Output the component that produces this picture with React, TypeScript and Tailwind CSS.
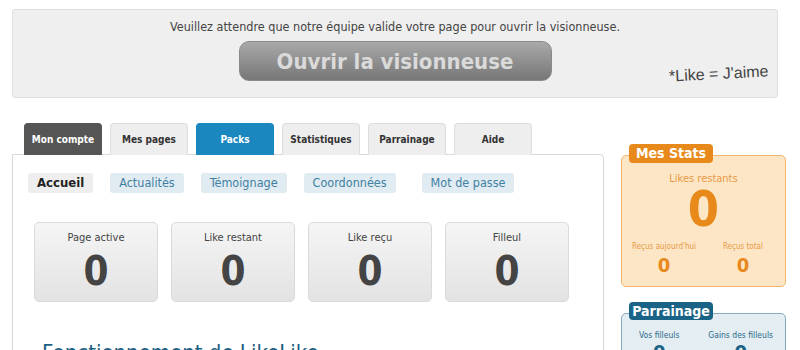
import React from "react";

const tabs = [
  { label: "Mon compte", cls: "bg-[#555555] text-white border-[#555555]" },
  { label: "Mes pages", cls: "bg-[#eeeeee] text-[#333333] border-[#dddddd]" },
  { label: "Packs", cls: "bg-[#1a87bf] text-white border-[#1a87bf]" },
  { label: "Statistiques", cls: "bg-[#eeeeee] text-[#333333] border-[#dddddd]" },
  { label: "Parrainage", cls: "bg-[#eeeeee] text-[#333333] border-[#dddddd]" },
  { label: "Aide", cls: "bg-[#eeeeee] text-[#333333] border-[#dddddd]" },
];

const subnav = [
  { s: "Actualités", m: "ml-[17px]" },
  { s: "Témoignage", m: "ml-[17px]" },
  { s: "Coordonnées", m: "ml-[17px]" },
  { s: "Mot de passe", m: "ml-[26px]" },
];

const cards = ["Page active", "Like restant", "Like reçu", "Filleul"];

export default function App() {
  return (
    <div
      className="w-[800px] h-[350px] overflow-hidden bg-white"
      style={{ fontFamily: '"DejaVu Sans Condensed", "DejaVu Sans", sans-serif' }}
    >
      <div className="pt-[9px] px-[12px]">
        <div className="h-[89px] w-[766px] rounded-[3px] border border-[#dedede] bg-[#efefef] flex flex-col items-center">
          <div className="mt-[9px] text-[12.5px] leading-[16px] text-[#444444]">
            Veuillez attendre que notre équipe valide votre page pour ouvrir la visionneuse.
          </div>
          <div className="w-full grid grid-cols-[1fr_auto_1fr] mt-[6px]">
            <div />
            <div className="w-[313px] h-[40px] rounded-[10px] border border-[#8a8a8a] bg-gradient-to-b from-[#a9a9a9] to-[#777777] flex items-center justify-center text-[22px] text-[#dadada] font-bold">
              Ouvrir la visionneuse
            </div>
            <div className="self-end justify-self-end pr-[8px]">
              <div className="text-[16px] text-[#444444] -rotate-3 leading-[18px] translate-y-[2px]" style={{ fontFamily: '"Liberation Sans", sans-serif' }}>
                *Like = J'aime
              </div>
            </div>
          </div>
        </div>

        <div className="flex mt-[25px] gap-[17px]">
          <div className="w-[592px]">
            <div className="flex gap-[8px] pl-[12px]">
              {tabs.map((t) => (
                <div
                  key={t.label}
                  className={`w-[78px] h-[32px] rounded-t-[4px] border border-b-0 flex items-center justify-center text-[10px] font-bold ${t.cls}`}
                >
                  {t.label}
                </div>
              ))}
            </div>
            <div className="h-[200px] -mt-[1px] border border-[#d8d8d8] rounded-tr-[4px] bg-white">
              <div className="flex pl-[15px] pt-[18px]">
                <div className="h-[20px] px-[9px] rounded-[3px] bg-[#eeeeee] text-[13px] font-bold text-[#222222] flex items-center">
                  Accueil
                </div>
                {subnav.map((x) => (
                  <div
                    key={x.s}
                    className={`${x.m} h-[20px] px-[9px] rounded-[3px] bg-[#e1ecf2] text-[12.5px] text-[#3f7fa3] flex items-center`}
                  >
                    {x.s}
                  </div>
                ))}
              </div>
              <div className="flex gap-[13px] pl-[21px] mt-[29px]">
                {cards.map((c) => (
                  <div
                    key={c}
                    className="w-[124px] h-[80px] rounded-[5px] border border-[#dadada] bg-gradient-to-b from-[#f5f5f5] to-[#e3e3e3] flex flex-col items-center"
                  >
                    <div className="mt-[8px] text-[11px] leading-[14px] text-[#444444]">{c}</div>
                    <div className="mt-[6px] text-[40px] leading-[40px] font-bold text-[#444444]">0</div>
                  </div>
                ))}
              </div>
              <div className="pl-[29px] mt-[38px] text-[22px] leading-[26px] text-[#1b5f83]">
                Fonctionnement de LikeLike
              </div>
            </div>
          </div>

          <div className="w-[165px] pt-[21px]">
            <div className="relative z-10 ml-[8px] w-[84px] h-[19px] rounded-[4px] bg-[#e8891c] text-white text-[14px] font-bold flex items-center justify-center">
              Mes Stats
            </div>
            <div className="-mt-[8px] h-[132px] rounded-[5px] border border-[#f3b46b] bg-[#fde6c6] flex flex-col items-center">
              <div className="mt-[16px] text-[11px] leading-[14px] text-[#e89a45]">Likes restants</div>
              <div className="text-[50px] leading-[46px] font-bold text-[#e8891c]">0</div>
              <div className="w-full flex justify-between mt-[9px] pl-[10px] pr-[22px]">
                <div className="flex flex-col items-center">
                  <div className="text-[8px] leading-[12px] text-[#e89a45]">Reçus aujourd'hui</div>
                  <div className="mt-[1px] text-[20px] leading-[22px] font-bold text-[#e8891c]">0</div>
                </div>
                <div className="flex flex-col items-center">
                  <div className="text-[8px] leading-[12px] text-[#e89a45]">Reçus total</div>
                  <div className="mt-[1px] text-[20px] leading-[22px] font-bold text-[#e8891c]">0</div>
                </div>
              </div>
            </div>

            <div className="relative z-10 mt-[15px] ml-[8px] w-[84px] h-[18px] rounded-[4px] bg-[#1b6386] text-white text-[14px] font-bold flex items-center justify-center">
              Parrainage
            </div>
            <div className="-mt-[7px] h-[80px] rounded-[5px] border border-[#86abbf] bg-[#e3edf2] flex flex-col">
              <div className="w-full flex justify-between mt-[15px] pl-[17px] pr-[12px]">
                <div className="flex flex-col items-center">
                  <div className="text-[8.5px] leading-[12px] text-[#2c6a8a]">Vos filleuls</div>
                  <div className="text-[20px] leading-[22px] font-bold text-[#1b6386]">0</div>
                </div>
                <div className="flex flex-col items-center">
                  <div className="text-[8.5px] leading-[12px] text-[#2c6a8a]">Gains des filleuls</div>
                  <div className="text-[20px] leading-[22px] font-bold text-[#1b6386]">0</div>
                </div>
              </div>
            </div>
          </div>
        </div>
      </div>
    </div>
  );
}
